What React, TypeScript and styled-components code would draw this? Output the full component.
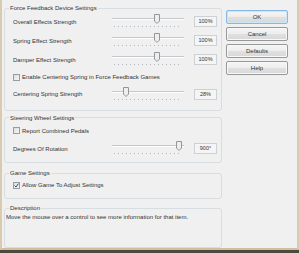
import React from "react";
import styled, { createGlobalStyle } from "styled-components";

const GlobalStyle = createGlobalStyle`
  html, body {
    margin: 0;
    padding: 0;
    background: #4e4840;
  }
  body {
    font-family: "Liberation Sans", Arial, sans-serif;
  }
`;

const Screen = styled.div`
  width: 299px;
  height: 253px;
  overflow: hidden;
`;

const Window = styled.div`
  width: 299px;
  height: 250px;
  box-sizing: border-box;
  background: #f0f0f0;
  border-left: 2px solid #d8cbb0;
  border-right: 2px solid #d8cbb0;
  border-bottom: 2px solid #cdbf9f;
  padding: 4px 0 0 2px;
  display: flex;
  gap: 4px;
`;

const LeftColumn = styled.div`
  width: 218px;
  display: flex;
  flex-direction: column;
`;

const Group = styled.fieldset<{ $height: number; $gap?: number }>`
  margin: ${(p) => p.$gap ?? 0}px 0 0 0;
  padding: 0 4px 0 5px;
  height: ${(p) => p.$height}px;
  box-sizing: border-box;
  border: 1px solid #d8dde2;
  border-radius: 3px;
  min-width: 0;
`;

const Legend = styled.legend`
  padding: 0 1px;
  margin-left: -1px;
  font-size: 6px;
  line-height: 8px;
  color: #333;
`;

const Row = styled.div<{ $height: number }>`
  height: ${(p) => p.$height}px;
  display: flex;
  align-items: center;
  padding-left: 3px;
`;

const Label = styled.span`
  width: 99px;
  font-size: 6px;
  line-height: 8px;
  color: #333;
  white-space: nowrap;
`;

const SliderBox = styled.div`
  position: relative;
  width: 72px;
  height: 15px;
  margin-right: 10px;
`;

const Track = styled.div`
  position: absolute;
  left: 0;
  right: 0;
  top: 4px;
  height: 1px;
  background: #c4c7cb;
  border-bottom: 1px solid #fdfdfd;
`;

const Ticks = styled.div`
  position: absolute;
  left: 2px;
  right: 2px;
  top: 12px;
  height: 1px;
  background: repeating-linear-gradient(
    to right,
    #b4b7bb 0 1px,
    transparent 1px 4px
  );
`;

const Thumb = styled.svg`
  position: absolute;
  top: 0;
  width: 6px;
  height: 10px;
`;

const ValueBox = styled.div`
  width: 21px;
  height: 9px;
  border: 1px solid #cdd0d4;
  background: #f5f5f5;
  font-size: 5.5px;
  line-height: 9px;
  text-align: center;
  color: #333;
`;

const CheckRow = styled.label`
  display: flex;
  align-items: center;
  gap: 2px;
  font-size: 6px;
  line-height: 8px;
  color: #333;
  white-space: nowrap;
`;

const CheckBox = styled.span`
  width: 5px;
  height: 5px;
  border: 1px solid #999ca1;
  background: linear-gradient(135deg, #dedede, #f6f6f6);
  display: flex;
  align-items: center;
  justify-content: center;
`;

const Description = styled.div`
  font-size: 6px;
  line-height: 8px;
  color: #333;
  padding: 1px 0 0 0;
  margin-left: -4px;
  white-space: nowrap;
`;

const Buttons = styled.div`
  width: 62px;
  padding-top: 6px;
  display: flex;
  flex-direction: column;
  gap: 3px;
`;

const Button = styled.button<{ $default?: boolean }>`
  height: 14px;
  margin: 0;
  padding: 0;
  box-sizing: border-box;
  border: 1px solid ${(p) => (p.$default ? "#86b8e8" : "#979898")};
  border-radius: 2px;
  background: linear-gradient(
    to bottom,
    #f5f5f5 0%,
    #ededed 50%,
    #e0e0e0 51%,
    #d8d8d8 100%
  );
  box-shadow: inset 0 0 0 1px ${(p) => (p.$default ? "#cbe5f9" : "#f8f8f8")};
  font-family: "Liberation Sans", Arial, sans-serif;
  font-size: 6px;
  color: #333;
`;

const SliderThumb = ({ left }: { left: number }) => (
  <Thumb viewBox="0 0 6 10" style={{ left }}>
    <path
      d="M0.5 0.5 H5.5 V7 L3 9.5 L0.5 7 Z"
      fill="#eeeeee"
      stroke="#93969b"
      strokeWidth="1"
    />
  </Thumb>
);

const Slider = ({ thumb }: { thumb: number }) => (
  <SliderBox>
    <Track />
    <Ticks />
    <SliderThumb left={thumb} />
  </SliderBox>
);

const Check = ({ checked, children }: { checked?: boolean; children: React.ReactNode }) => (
  <CheckRow>
    <CheckBox>
      {checked && (
        <svg width="5" height="5" viewBox="0 0 5 5">
          <path d="M0.6 2.6 L2 4 L4.5 0.6" fill="none" stroke="#3a4670" strokeWidth="1" />
        </svg>
      )}
    </CheckBox>
    {children}
  </CheckRow>
);

const strengths = [
  { label: "Overall Effects Strength", value: "100%" },
  { label: "Spring Effect Strength", value: "100%" },
  { label: "Damper Effect Strength", value: "100%" },
];

const App: React.FC = () => {
  return (
    <Screen>
      <GlobalStyle />
      <Window>
        <LeftColumn>
          <Group $height={107}>
            <Legend>Force Feedback Device Settings</Legend>
            {strengths.map((s) => (
              <Row $height={19} key={s.label}>
                <Label>{s.label}</Label>
                <Slider thumb={42} />
                <ValueBox>{s.value}</ValueBox>
              </Row>
            ))}
            <Row $height={16}>
              <Check>Enable Centering Spring in Force Feedback Games</Check>
            </Row>
            <Row $height={18}>
              <Label>Centering Spring Strength</Label>
              <Slider thumb={11} />
              <ValueBox>28%</ValueBox>
            </Row>
          </Group>
          <Group $height={50} $gap={3}>
            <Legend>Steering Wheel Settings</Legend>
            <Row $height={18}>
              <Check>Report Combined Pedals</Check>
            </Row>
            <Row $height={18}>
              <Label>Degrees Of Rotation</Label>
              <Slider thumb={64} />
              <ValueBox>900°</ValueBox>
            </Row>
          </Group>
          <Group $height={30} $gap={6}>
            <Legend>Game Settings</Legend>
            <Row $height={16}>
              <Check checked>Allow Game To Adjust Settings</Check>
            </Row>
          </Group>
          <Group $height={44} $gap={5}>
            <Legend>Description</Legend>
            <Description>
              Move the mouse over a control to see more information for that item.
            </Description>
          </Group>
        </LeftColumn>
        <Buttons>
          <Button $default>OK</Button>
          <Button>Cancel</Button>
          <Button>Defaults</Button>
          <Button>Help</Button>
        </Buttons>
      </Window>
    </Screen>
  );
};

export default App;
